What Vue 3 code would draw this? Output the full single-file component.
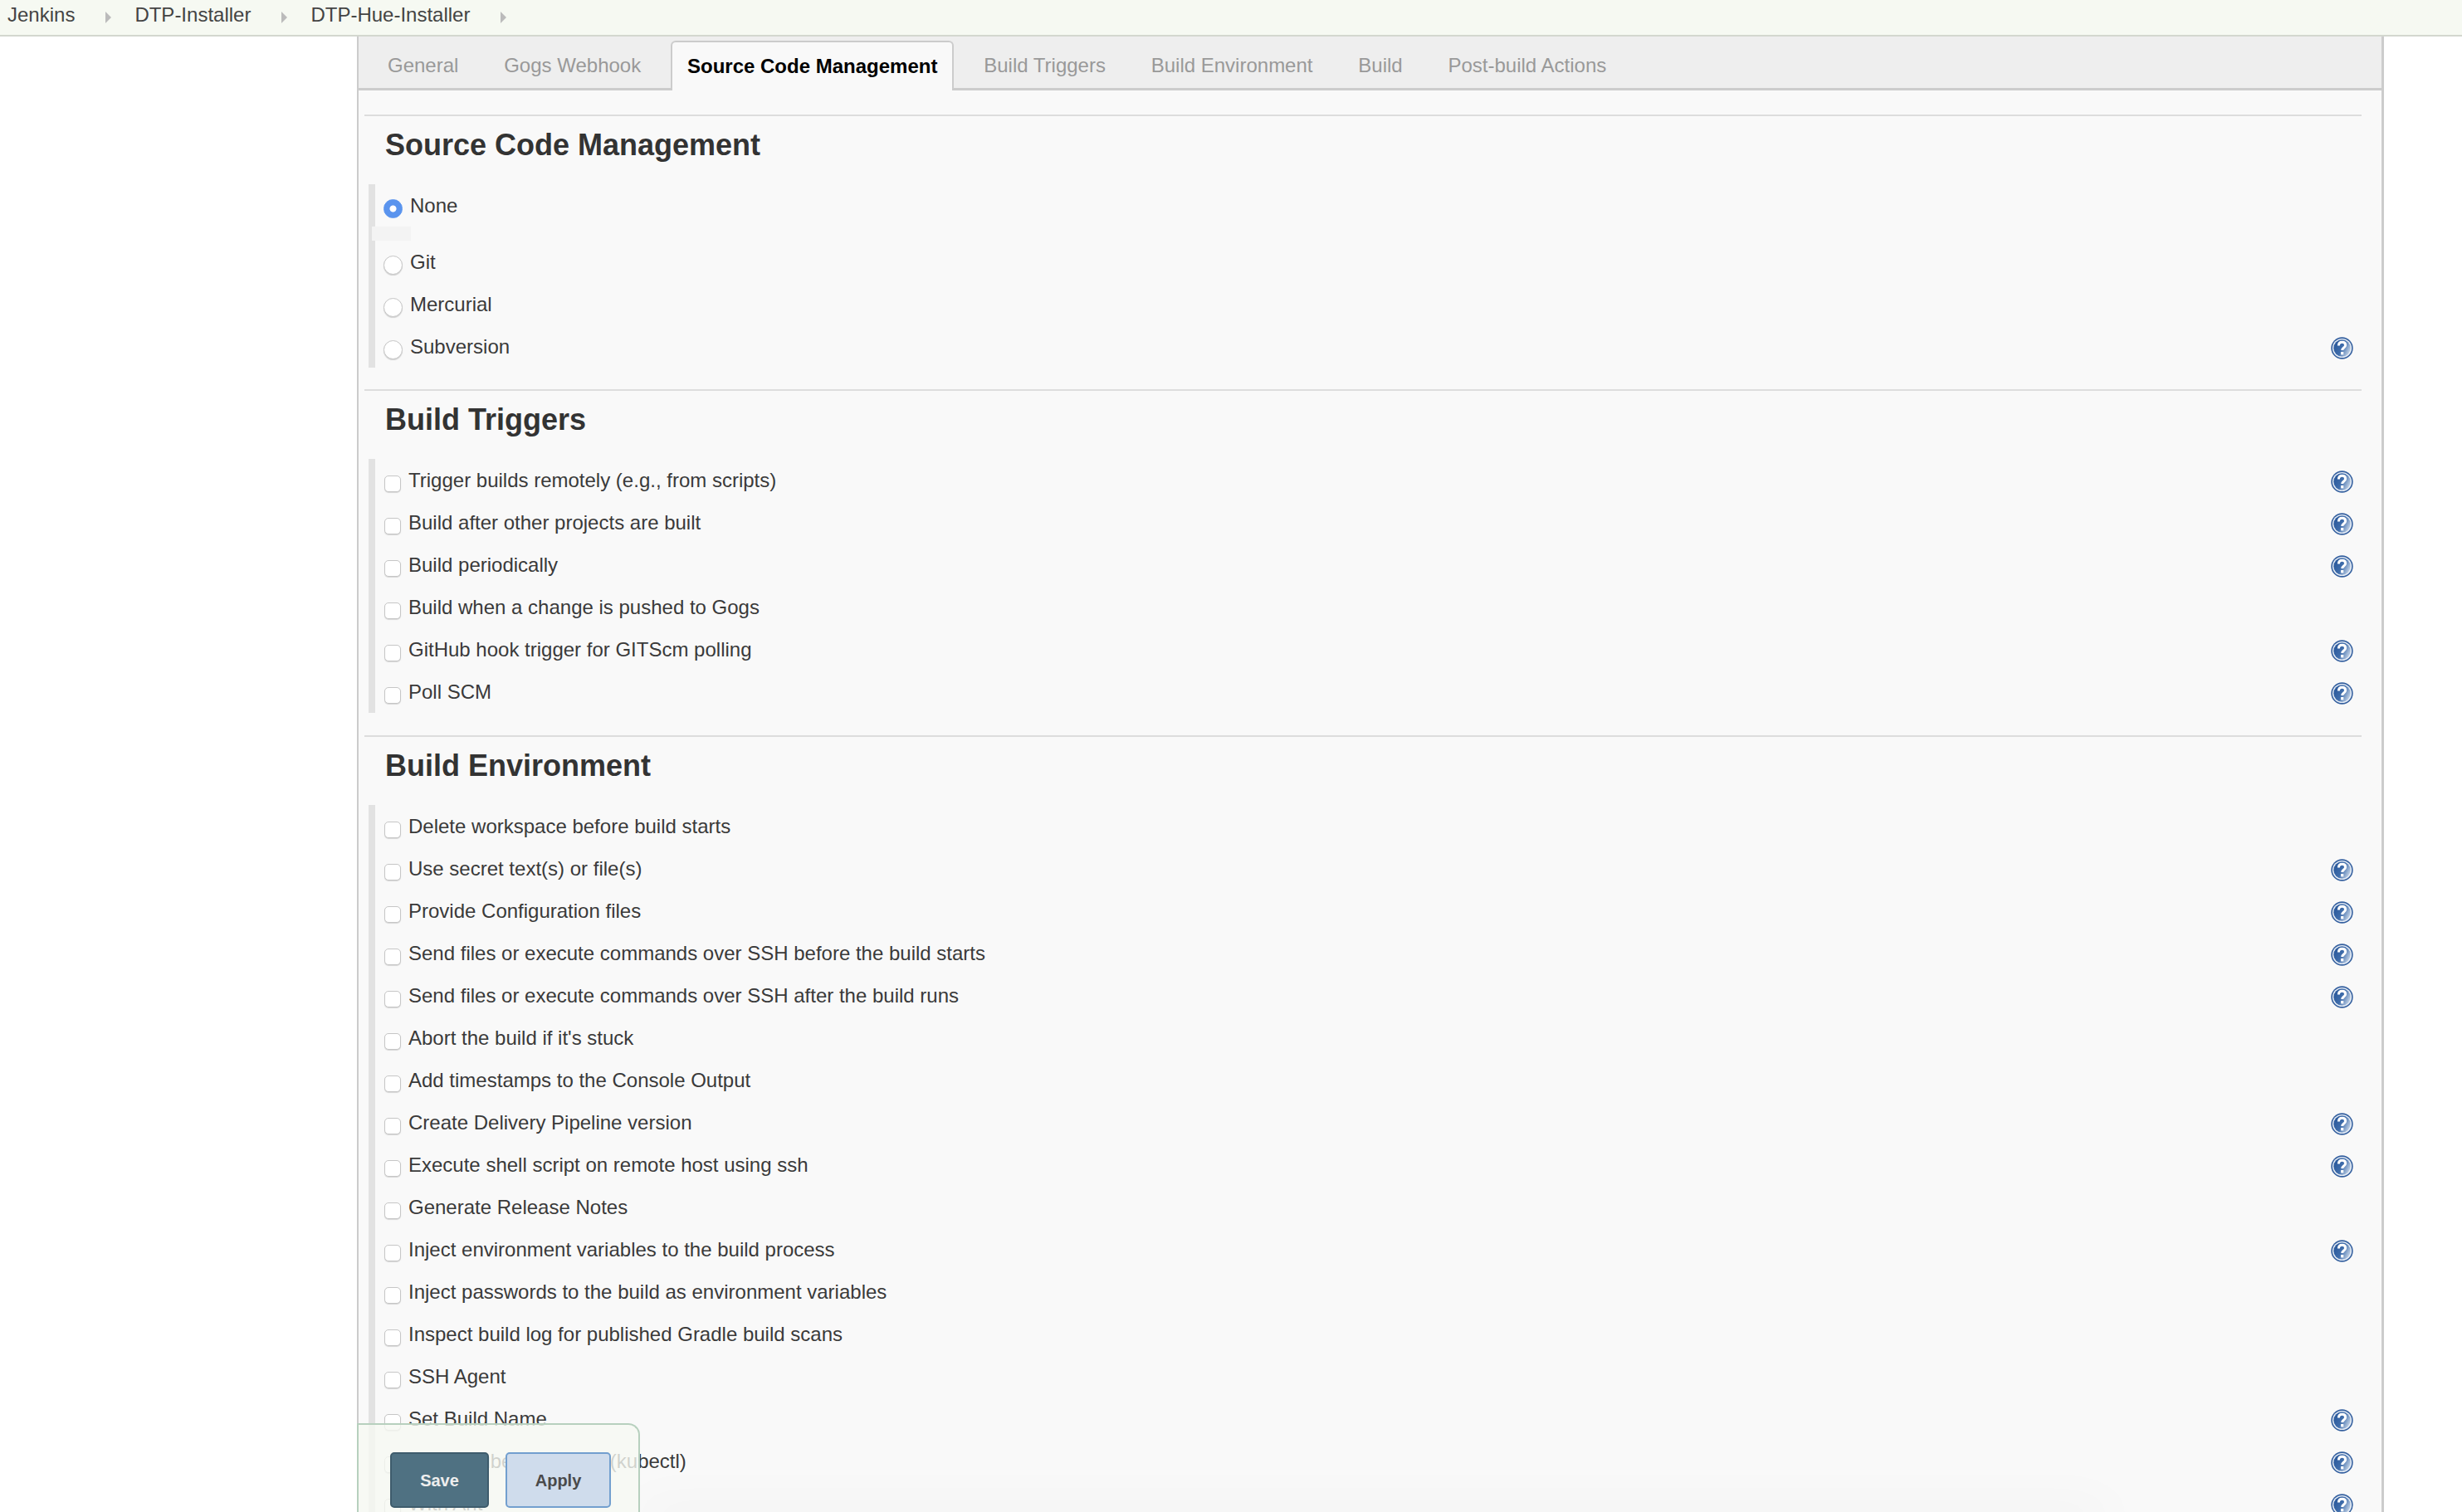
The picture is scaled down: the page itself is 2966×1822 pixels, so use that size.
<template>
  <div class="page">
    <div class="breadcrumbs">
      <template v-for="crumb in crumbs" :key="crumb">
        <a class="crumb">{{ crumb }}</a>
        <span class="chevron"></span>
      </template>
    </div>

    <div class="main">
      <div class="tabs">
        <div v-for="tab in tabs" :key="tab" class="tab" :class="{ active: tab === 'Source Code Management' }">
          {{ tab }}
        </div>
      </div>

      <section class="section first">
        <h2>Source Code Management</h2>
        <div class="options">
          <label class="row">
            <input type="radio" name="scm" checked />
            <span>None</span>
          </label>
          <div class="spacer"></div>
          <label v-for="item in scmOptions" :key="item.name" class="row">
            <input type="radio" name="scm" />
            <span>{{ item.name }}</span>
            <svg v-if="item.help" class="help" viewBox="0 0 27 27"><use href="#help-icon" /></svg>
          </label>
        </div>
      </section>

      <section class="section">
        <h2>Build Triggers</h2>
        <div class="options">
          <label v-for="item in triggers" :key="item.name" class="row">
            <input type="checkbox" />
            <span>{{ item.name }}</span>
            <svg v-if="item.help" class="help" viewBox="0 0 27 27"><use href="#help-icon" /></svg>
          </label>
        </div>
      </section>

      <section class="section">
        <h2>Build Environment</h2>
        <div class="options">
          <label v-for="item in environment" :key="item.name" class="row">
            <input type="checkbox" />
            <span>{{ item.name }}</span>
            <svg v-if="item.help" class="help" viewBox="0 0 27 27"><use href="#help-icon" /></svg>
          </label>
        </div>
      </section>
    </div>

    <div class="bottom-shade"></div>

    <div class="save-bar">
      <button class="btn save">Save</button>
      <button class="btn apply">Apply</button>
    </div>

    <svg class="defs" width="0" height="0">
      <defs>
        <linearGradient id="help-fill" x1="0.05" y1="0.3" x2="1" y2="0.75">
          <stop offset="0" stop-color="#2c5a9c" />
          <stop offset="0.45" stop-color="#3f6dab" />
          <stop offset="1" stop-color="#cfdcec" />
        </linearGradient>
        <g id="help-icon">
          <circle cx="13.5" cy="13.5" r="13.2" fill="#35609f" />
          <circle cx="13.5" cy="13.5" r="11.6" fill="#e8eef6" />
          <circle cx="13.5" cy="13.5" r="10.2" fill="url(#help-fill)" />
          <path d="M9.4 10.4c0-2.7 1.9-4.1 4.2-4.1s4 1.4 4 3.6c0 3.3-3.9 3-3.9 6.2" fill="none" stroke="#fff" stroke-width="3" />
          <rect x="12.1" y="18" width="3.2" height="3.4" fill="#fff" />
        </g>
      </defs>
    </svg>
  </div>
</template>

<script setup>
const crumbs = ["Jenkins", "DTP-Installer", "DTP-Hue-Installer"];

const tabs = [
  "General",
  "Gogs Webhook",
  "Source Code Management",
  "Build Triggers",
  "Build Environment",
  "Build",
  "Post-build Actions",
];

const scmOptions = [
  { name: "Git" },
  { name: "Mercurial" },
  { name: "Subversion", help: true },
];

const triggers = [
  { name: "Trigger builds remotely (e.g., from scripts)", help: true },
  { name: "Build after other projects are built", help: true },
  { name: "Build periodically", help: true },
  { name: "Build when a change is pushed to Gogs" },
  { name: "GitHub hook trigger for GITScm polling", help: true },
  { name: "Poll SCM", help: true },
];

const environment = [
  { name: "Delete workspace before build starts" },
  { name: "Use secret text(s) or file(s)", help: true },
  { name: "Provide Configuration files", help: true },
  { name: "Send files or execute commands over SSH before the build starts", help: true },
  { name: "Send files or execute commands over SSH after the build runs", help: true },
  { name: "Abort the build if it's stuck" },
  { name: "Add timestamps to the Console Output" },
  { name: "Create Delivery Pipeline version", help: true },
  { name: "Execute shell script on remote host using ssh", help: true },
  { name: "Generate Release Notes" },
  { name: "Inject environment variables to the build process", help: true },
  { name: "Inject passwords to the build as environment variables" },
  { name: "Inspect build log for published Gradle build scans" },
  { name: "SSH Agent" },
  { name: "Set Build Name", help: true },
  { name: "Setup Kubernetes CLI (kubectl)", help: true },
  { name: "With Ant", help: true },
];
</script>

<style>
html,
body {
  margin: 0;
  height: 1822px;
  overflow: hidden;
  background: #fff;
}
</style>

<style scoped>
.page {
  position: relative;
  width: 2966px;
  height: 1822px;
  overflow: hidden;
  font-family: "Liberation Sans", Arial, sans-serif;
  font-size: 24px;
  color: #3a3a3a;
}

.breadcrumbs {
  display: flex;
  align-items: center;
  box-sizing: border-box;
  height: 44px;
  padding: 0 0 6px 9px;
  background: #f6f9f2;
  border-bottom: 2px solid #d3d7cf;
}

.crumb {
  color: #444;
}

.chevron {
  width: 0;
  height: 0;
  margin: 6px 28px 0 37px;
  border-top: 7px solid transparent;
  border-bottom: 7px solid transparent;
  border-left: 7px solid #bbb;
}

.main {
  box-sizing: border-box;
  height: 1778px;
  margin-left: 430px;
  width: 2442px;
  background: #f9f9f9;
  border-left: 2px solid #ccc;
  border-right: 3px solid #ccc;
}

.tabs {
  display: flex;
  gap: 16.8px;
  box-sizing: border-box;
  height: 65px;
  padding: 5px 0 0 16px;
  background: #eee;
  border-bottom: 3px solid #ccc;
}

.tab {
  display: flex;
  align-items: center;
  box-sizing: border-box;
  height: 60px;
  padding: 0 19px;
  color: #999;
}

.tab.active {
  height: 60px;
  padding: 0 18px;
  color: #000;
  font-weight: bold;
  background: #f9f9f9;
  border: 2px solid #ccc;
  border-bottom: none;
  border-radius: 6px 6px 0 0;
}

.section {
  margin: 0 24px 0 7px;
  padding-bottom: 26px;
  border-top: 2px solid #ddd;
}

.section + .section {
  padding-bottom: 27px;
}

.section.first {
  margin-top: 29px;
}

h2 {
  display: flex;
  align-items: center;
  height: 70px;
  margin: 0 0 12px;
  padding-left: 25px;
  font-size: 36px;
  font-weight: bold;
  color: #333;
}

.options {
  position: relative;
  margin-left: 5px;
  padding-left: 10px;
  border-left: 8px solid #e2e2e2;
}

.spacer {
  height: 17px;
  width: 47px;
  margin-left: -14px;
  background: #f3f3f3;
}

.row {
  display: flex;
  align-items: center;
  height: 51px;
  padding-top: 1px;
  box-sizing: border-box;
}

input {
  appearance: none;
  flex: none;
  margin: 7px 0 0;
  background: #fff;
}

input[type="radio"] {
  box-sizing: border-box;
  width: 23px;
  height: 23px;
  margin-right: 9px;
  border: 1px solid #c6c6c6;
  border-radius: 50%;
  box-shadow: 0 1px 1px rgba(0, 0, 0, 0.16);
}

input[type="radio"]:checked {
  background: radial-gradient(circle, #fff 0 3.5px, #5a94ee 4.5px);
  border-color: #5a94ee;
  box-shadow: none;
}

input[type="checkbox"] {
  box-sizing: border-box;
  width: 20px;
  height: 20px;
  margin-left: 1px;
  margin-right: 9px;
  border: 1px solid #c6c6c6;
  border-radius: 5px;
  box-shadow: 0 1px 1px rgba(0, 0, 0, 0.14);
}

.help {
  flex: none;
  width: 27px;
  height: 27px;
  margin: 3px 10px 0 auto;
}

.bottom-shade {
  position: absolute;
  left: 770px;
  right: 426px;
  top: 1822px;
  height: 10px;
  box-shadow: 0 0 60px rgba(0, 0, 0, 0.1);
}

.save-bar {
  position: absolute;
  left: 430px;
  bottom: 0;
  display: flex;
  gap: 20px;
  box-sizing: border-box;
  width: 341px;
  height: 107px;
  padding: 33px 0 0 38px;
  background: rgba(246, 249, 242, 0.8);
  border: 2px solid #b7d0be;
  border-bottom: none;
  border-radius: 0 14px 0 0;
}

.btn {
  box-sizing: border-box;
  height: 67px;
  padding: 2px 0 0;
  font-family: "Liberation Sans", Arial, sans-serif;
  font-size: 20px;
  font-weight: bold;
  border-radius: 5px;
}

.save {
  width: 119px;
  color: #eee;
  background: #4f7182;
  border: 2px solid #3e5c6c;
}

.apply {
  width: 127px;
  color: #4a4a4a;
  background: #cfdcec;
  border: 2px solid #729fcf;
}

.defs {
  position: absolute;
}
</style>
